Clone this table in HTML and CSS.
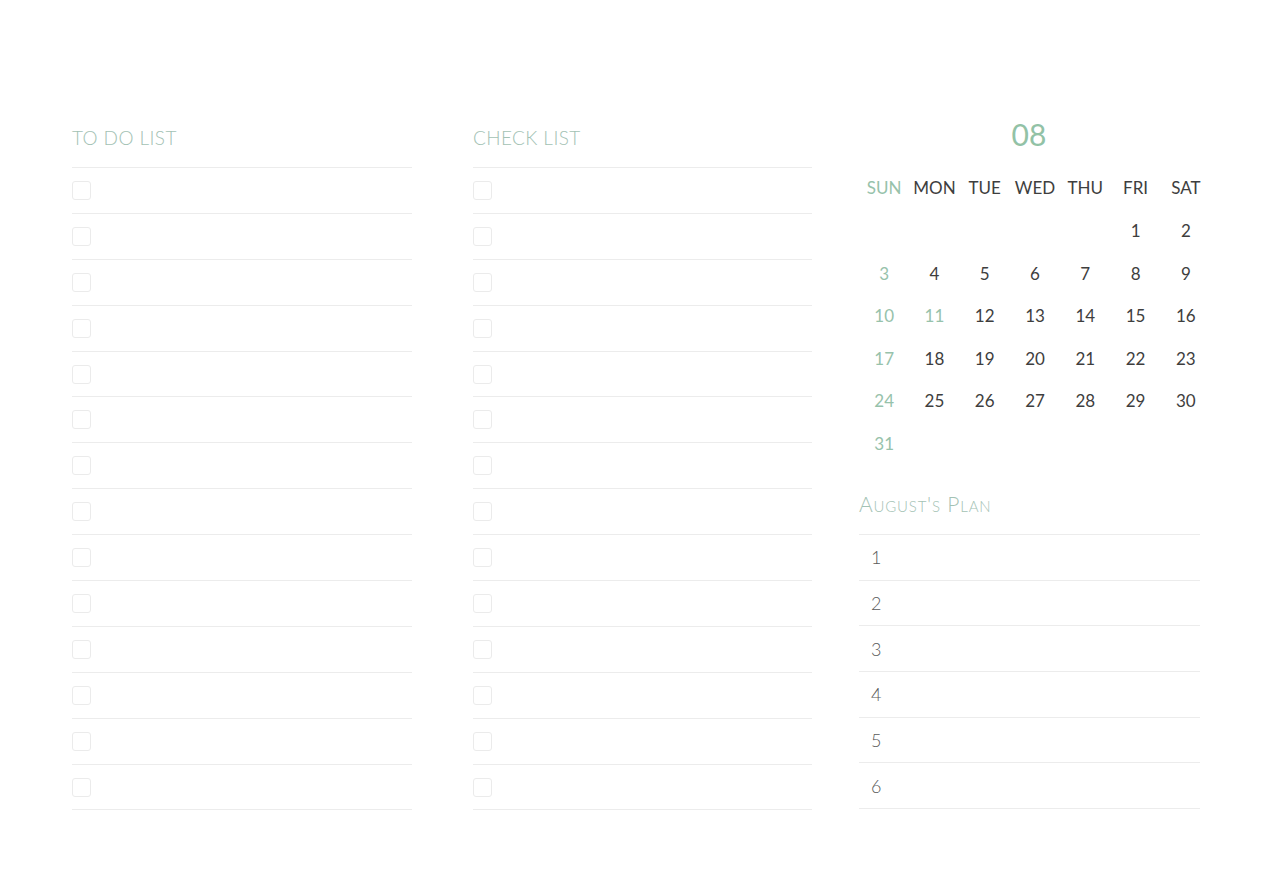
FILE: index.html
```html
<!DOCTYPE html>
<html>
<head>
<meta charset="utf-8">
<link rel="stylesheet" href="styles.css">
</head>
<body>
<div class="page">
  <section class="list-col">
    <h2 class="list-title">TO DO LIST</h2>
    <ul class="rows">
      <li><span class="box"></span></li><li><span class="box"></span></li><li><span class="box"></span></li><li><span class="box"></span></li><li><span class="box"></span></li><li><span class="box"></span></li><li><span class="box"></span></li><li><span class="box"></span></li><li><span class="box"></span></li><li><span class="box"></span></li><li><span class="box"></span></li><li><span class="box"></span></li><li><span class="box"></span></li><li><span class="box"></span></li>
    </ul>
  </section>
  <section class="list-col check">
    <h2 class="list-title">CHECK LIST</h2>
    <ul class="rows">
      <li><span class="box"></span></li><li><span class="box"></span></li><li><span class="box"></span></li><li><span class="box"></span></li><li><span class="box"></span></li><li><span class="box"></span></li><li><span class="box"></span></li><li><span class="box"></span></li><li><span class="box"></span></li><li><span class="box"></span></li><li><span class="box"></span></li><li><span class="box"></span></li><li><span class="box"></span></li><li><span class="box"></span></li>
    </ul>
  </section>
  <section class="cal-col">
    <div class="month">08</div>
    <div class="cal">
      <span class="wd sun">SUN</span><span class="wd">MON</span><span class="wd">TUE</span><span class="wd">WED</span><span class="wd">THU</span><span class="wd">FRI</span><span class="wd">SAT</span>
      <span></span><span></span><span></span><span></span><span></span><span>1</span><span>2</span>
      <span class="g">3</span><span>4</span><span>5</span><span>6</span><span>7</span><span>8</span><span>9</span>
      <span class="g">10</span><span class="g">11</span><span>12</span><span>13</span><span>14</span><span>15</span><span>16</span>
      <span class="g">17</span><span>18</span><span>19</span><span>20</span><span>21</span><span>22</span><span>23</span>
      <span class="g">24</span><span>25</span><span>26</span><span>27</span><span>28</span><span>29</span><span>30</span>
      <span class="g">31</span>
    </div>
    <h2 class="plan-title">August's Plan</h2>
    <ol class="plan">
      <li>1</li><li>2</li><li>3</li><li>4</li><li>5</li><li>6</li>
    </ol>
  </section>
</div>
</body>
</html>
```

FILE: styles.css
```css
* { box-sizing: border-box; }
html, body { margin: 0; padding: 0; background: #fff; }
body { font-family: "Lato", "Liberation Sans", sans-serif; color: #444; width: 1280px; height: 880px; overflow: hidden; }
.page { display: flex; padding: 112px 0 0 72px; }
.list-col { width: 340px; margin-right: 61px; }
.list-col.check { width: 339px; margin-right: 47px; }
.list-title {
  margin: 0; height: 56px; padding-top: 14px;
  font-family: "Lato", sans-serif; font-weight: 300; font-size: 19px; letter-spacing: 0.4px;
  color: #a3c2b4; border-bottom: 1px solid #ececec;
}
.rows { list-style: none; margin: 0; padding: 0; }
.rows li { height: 45.9px; border-bottom: 1px solid #ececec; display: flex; align-items: center; }
.box { width: 19px; height: 19px; border: 1.5px solid #ebebeb; border-radius: 3px; }
.cal-col { width: 352px; display: flex; flex-direction: column; }
.month { text-align: center; padding-right: 12px; font-size: 30px; font-weight: 400; color: #92c2a6; line-height: 44px; height: 44px; }
.cal { display: grid; grid-template-columns: repeat(7, 1fr); grid-template-rows: 38px; grid-auto-rows: 42.5px; margin-top: 16px; }
.cal span { text-align: center; font-size: 17px; line-height: 42.5px; color: #3e3e3e; }
.cal .wd { font-size: 17px; line-height: 32px; }
.cal .sun, .cal .g { color: #97c2ab; }
.plan-title {
  margin: 26px 0 0 0; width: 341px; height: 44px;
  font-family: "Lato", sans-serif; font-weight: 300; font-variant: small-caps; font-size: 21px; letter-spacing: 0.8px;
  color: #a3c2b4; border-bottom: 1px solid #ececec;
}
.plan { list-style: none; margin: 0; padding: 0; width: 341px; }
.plan li { height: 45.7px; border-bottom: 1px solid #ececec; padding-left: 12px; font-size: 18px; font-weight: 300; color: #5a5a5a; display: flex; align-items: center; }
```
